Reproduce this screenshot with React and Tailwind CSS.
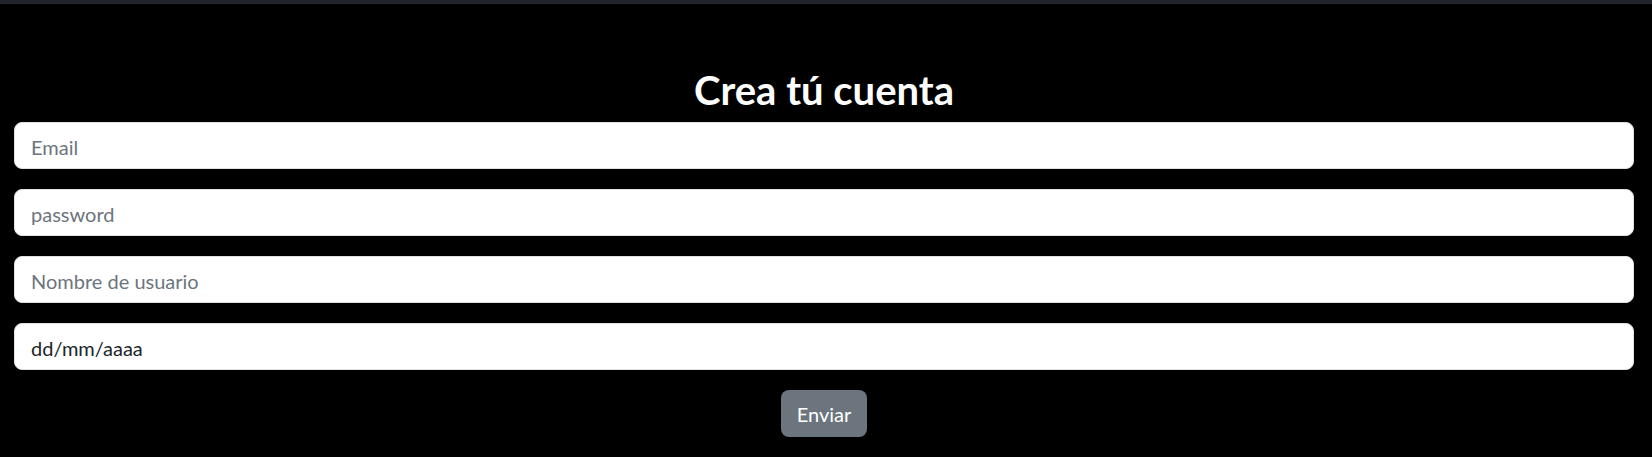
import React from "react";

const fields = [
    { type: "email", placeholder: "Email" },
    { type: "password", placeholder: "password" },
    { type: "text", placeholder: "Nombre de usuario" },
];

function App() {
    return (
        <div className="min-h-[457px] bg-black font-['Lato',sans-serif]">
            <div className="h-[4px] bg-[#22252b]" />
            <form className="pl-[14px] pr-[18px] pt-[62px] flex flex-col">
                <h1 className="text-[40px] leading-[48px] font-bold text-white text-center mb-[8px]">
                    Crea tú cuenta
                </h1>
                <div className="flex flex-col gap-[20px]">
                    {fields.map((f) => (
                        <input
                            key={f.placeholder}
                            type={f.type}
                            placeholder={f.placeholder}
                            className="h-[47px] w-full rounded-[8px] border border-[#dee2e6] bg-white px-[16px] pt-[2px] text-[20px] text-[#212529] placeholder:text-[#6c757d] outline-none"
                        />
                    ))}
                    <div className="h-[47px] w-full rounded-[8px] border border-[#dee2e6] bg-white px-[16px] pt-[2px] text-[20px] text-[#212529] flex items-center">
                        dd/mm/aaaa
                    </div>
                </div>
                <div className="flex justify-center mt-[20px]">
                    <button
                        type="button"
                        className="h-[47px] px-[16px] rounded-[8px] bg-[#6c757d] text-white text-[20px]"
                    >
                        Enviar
                    </button>
                </div>
            </form>
        </div>
    );
}

export default App;
